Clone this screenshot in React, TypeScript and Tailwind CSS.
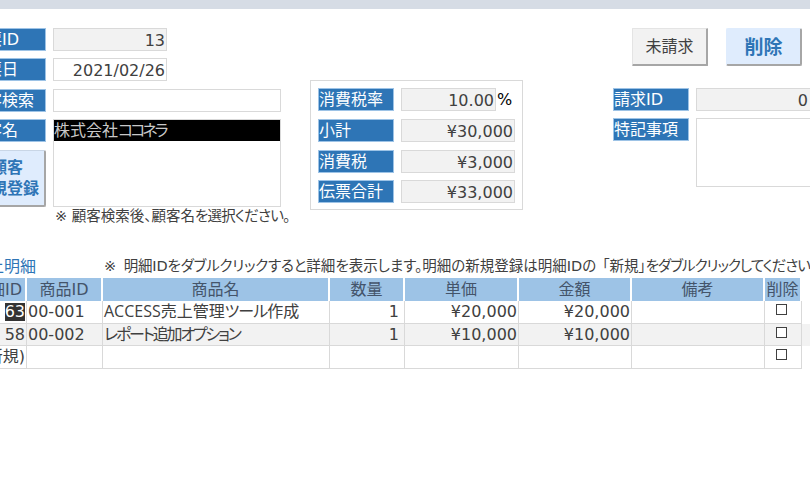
const font = "font-['DejaVu_Sans','Noto_Sans_CJK_JP',sans-serif] [font-feature-settings:'palt']";

function Label({ text, width }: { text: string; width: string }) {
  return (
    <div className={`${width} h-[23px] shrink-0 bg-[#2e75b6] border border-[#9dc3e6] text-[16px] leading-[21px] text-white whitespace-nowrap overflow-hidden`}>
      {text}
    </div>
  );
}

function Field({ value, width, gray, className }: { value?: string; width: string; gray?: boolean; className?: string }) {
  return (
    <div className={`${width} h-[23px] shrink-0 border border-[#d9d9d9] ${gray ? "bg-[#f2f2f2]" : "bg-white"} pr-[1px] text-right text-[16px] leading-[23px] text-[#404040] whitespace-nowrap ${className ?? ""}`}>
      {value}
    </div>
  );
}

const leftRows = [
  { label: "伝票ID", value: "13", gray: true },
  { label: "伝票日", value: "2021/02/26", gray: false },
];

const taxRows = [
  { label: "小計", value: "¥30,000" },
  { label: "消費税", value: "¥3,000" },
  { label: "伝票合計", value: "¥33,000" },
];

const gridCols = "grid grid-cols-[57px_76px_227px_75px_114px_113px_133px_37px] w-[832px] ml-[20px]";

const headers = ["明細ID", "商品ID", "商品名", "数量", "単価", "金額", "備考", "削除"];

const rows = [
  { id: "63", code: "00-001", name: <><span className="font-['Open_Sans']">ACCESS</span>売上管理<span className="tracking-[-1px]">ツール</span>作成</>, qty: "1", price: "¥20,000", total: "¥20,000", bg: "bg-white" },
  { id: "58", code: "00-002", name: <span className="tracking-[-2.2px]">レポート追加オプション</span>, qty: "1", price: "¥10,000", total: "¥10,000", bg: "bg-[#f2f2f2]" },
  { id: "(新規)", code: "", name: "", qty: "", price: "", total: "", bg: "bg-white" },
];

const cell = "h-[22.6px] border-r border-b border-[#d9d9d9] text-[16px] leading-[21px] text-[#404040] whitespace-nowrap overflow-hidden";

function Check() {
  return (
    <div className={`${cell} flex justify-center pt-[3px] pr-[3px]`}>
      <div className="w-[11px] h-[11px] border border-[#404040] bg-white" />
    </div>
  );
}

export default function App() {
  return (
    <div className={`w-[810px] h-[498px] overflow-hidden bg-white ${font}`}>
      <div className="w-[860px] -ml-[50px]">
        <div className="h-[9px] bg-[#d6dce5]" />
        <div className="flex pt-[19px] h-[247px]">
          <div className="w-[360px] shrink-0 flex flex-col gap-[7.3px]">
            {leftRows.map((r) => (
              <div key={r.label} className="flex gap-[7px]">
                <div className="w-[96px] flex justify-end">
                  <Label text={r.label} width="w-[77px]" />
                </div>
                <Field value={r.value} width="w-[114px]" gray={r.gray} />
              </div>
            ))}
            <div className="flex gap-[7px]">
              <div className="w-[96px] flex justify-end">
                <Label text="顧客検索" width="w-[77px]" />
              </div>
              <Field width="w-[228px]" />
            </div>
            <div className="flex gap-[7px]">
              <div className="w-[96px] flex flex-col items-end gap-[8px]">
                <Label text="顧客名" width="w-[77px]" />
                <div className="w-[77px] h-[57px] rounded-[2px] bg-[#dfecfd] border border-[#c9d6e6] border-b-2 border-r-2 border-b-[#a6a6a6] border-r-[#a6a6a6] text-center text-[16px] leading-[21px] font-bold text-[#2e75b6] pt-[6px]">
                  顧客<br />新規登録
                </div>
              </div>
              <div>
                <div className="w-[228px] h-[88px] border border-[#d9d9d9] bg-white">
                  <div className="h-[21px] bg-black text-[#c8c8c8] text-[16px] leading-[21px] whitespace-nowrap">
                    株式会社<span className="tracking-[-3px]">ココネラ</span>
                  </div>
                </div>
                <p className="-mt-[1px] pl-[2px] text-[14.5px] leading-[20px] text-[#404040] whitespace-nowrap">
                  ※ 顧客検索後、顧客名<span className="tracking-[-0.8px]">を選択ください。</span>
                </p>
              </div>
            </div>
          </div>

          <div className="w-[213px] h-[130px] mt-[52px] shrink-0 border border-[#d9d9d9] flex flex-col gap-[7.3px] pl-[7px] pt-[7px]">
            <div className="flex gap-[7px]">
              <Label text="消費税率" width="w-[76px]" />
              <div className="flex">
                <Field value="10.00" width="w-[95px]" gray />
                <span className="text-[16px] leading-[24px] text-black pl-[1px]">%</span>
              </div>
            </div>
            {taxRows.map((r) => (
              <div key={r.label} className="flex gap-[7px]">
                <Label text={r.label} width="w-[76px]" />
                <Field value={r.value} width="w-[114px]" gray />
              </div>
            ))}
          </div>

          <div className="ml-[90px] w-[200px] shrink-0 flex flex-col">
            <div className="flex gap-[18px] pl-[19px] h-[60px]">
              <div className="w-[76px] h-[38px] rounded-[1px] bg-[#f2f2f2] border border-[#e4e4e4] border-b-2 border-r-2 border-b-[#a6a6a6] border-r-[#a6a6a6] text-center text-[16px] leading-[35px] text-[#404040]">未請求</div>
              <div className="w-[76px] h-[38px] rounded-[2px] bg-[#dfecfd] border border-[#dfecfd] border-b-2 border-r-2 border-b-[#a6a6a6] border-r-[#a6a6a6] text-center text-[19px] leading-[36px] font-bold text-[#2e75b6]">削除</div>
            </div>
            <div className="flex gap-[7px]">
              <Label text="請求ID" width="w-[76px]" />
              <Field value="0" width="w-[114px]" gray className="border-r-0 pr-[2px]" />
            </div>
            <div className="flex gap-[7px] mt-[7px]">
              <Label text="特記事項" width="w-[76px]" />
              <div className="w-[120px] h-[69px] border border-[#d9d9d9] bg-white" />
            </div>
          </div>
        </div>

        <div className="flex h-[22px] items-center whitespace-nowrap">
          <div className="w-[154px] shrink-0 text-[16px] text-[#2e75b6] text-right pr-[68px]">売上明細</div>
          <div className="text-[14.5px] text-[#404040]">
            <span className="mr-[3px]">※</span> <span className="tracking-[-0.2px]">明細IDをダブルクリックすると</span>詳細を表示します。明細の新規登録は明細IDの<span className="ml-[6px]">「新規」</span><span className="tracking-[-1px]">をダブルクリックしてください。</span>
          </div>
        </div>

        <div className={gridCols}>
          {headers.map((h) => (
            <div key={h} className="h-[23px] bg-[#9dc3e6] border-r-2 border-white text-center text-[16px] leading-[23px] text-[#44546a] whitespace-nowrap">
              {h}
            </div>
          ))}
        </div>
        {rows.map((r, i) => (
          <div key={r.id} className={`${r.bg} w-[860px]`}>
            <div className={gridCols}>
              <div className={`${cell} text-right pr-[1px]`}>
                <span className={i === 0 ? "bg-[#333333] text-white inline-block leading-[18px]" : ""}>{r.id}</span>
              </div>
              <div className={`${cell} pl-[1px]`}>{r.code}</div>
              <div className={`${cell} pl-[1px]`}>{r.name}</div>
              <div className={`${cell} text-right pr-[5px]`}>{r.qty}</div>
              <div className={`${cell} text-right pr-[1px]`}>{r.price}</div>
              <div className={`${cell} text-right pr-[1px]`}>{r.total}</div>
              <div className={cell} />
              <Check />
            </div>
          </div>
        ))}
      </div>
    </div>
  );
}
